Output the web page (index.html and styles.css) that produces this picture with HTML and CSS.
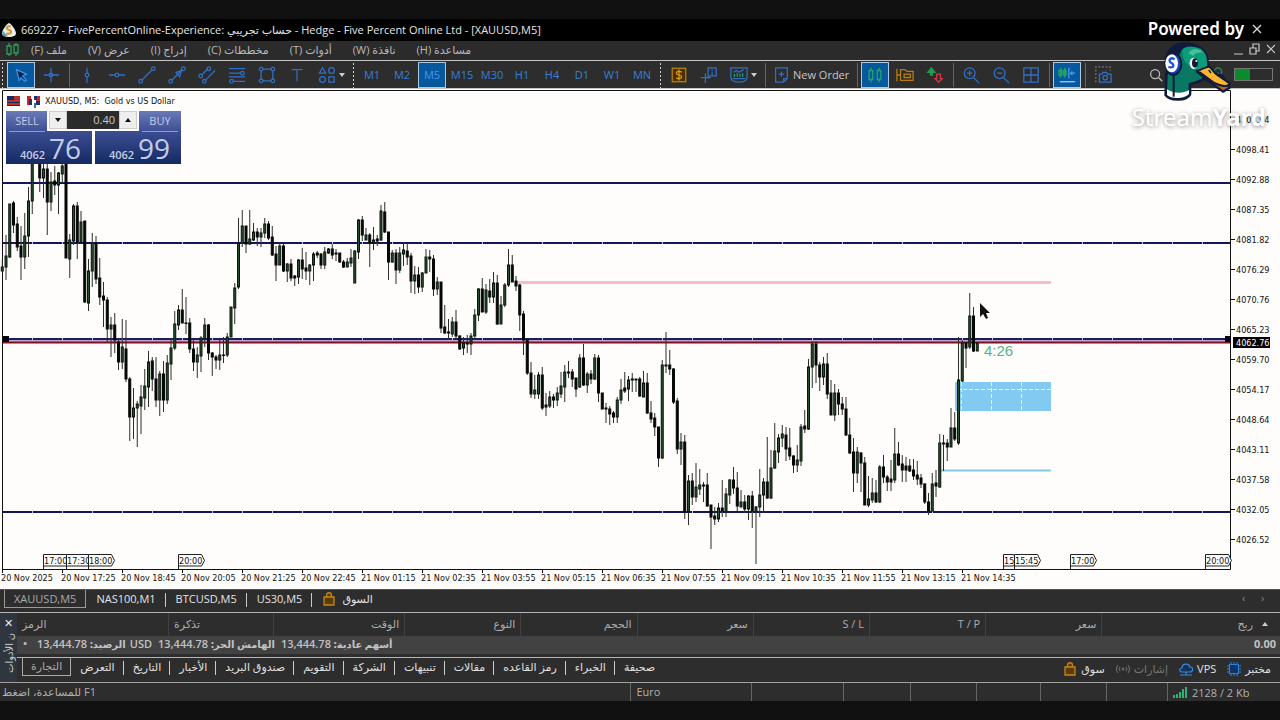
FILE: index.html
```html
<!DOCTYPE html>
<html lang="ar" dir="ltr">
<head>
<meta charset="utf-8">
<meta name="viewport" content="width=device-width, initial-scale=1">
<title>XAUUSD,M5</title>
<link rel="stylesheet" href="styles.css">
</head>
<body>
<header class="titlebar">
  <svg class="applogo" viewBox="0 0 16 16"><path d="M8 0c4 2 8 9 8 12 0 2-3 4-8 4s-8-2-8-4C0 9 4 2 8 0z" fill="#e8edf0"/><path d="M1 9l6 6H2c-2-1-2-3-1-6z" fill="#5aa0bd"/><path d="M10 4c-5-1-6 3-2 4s3 5-3 4" fill="none" stroke="#d29a28" stroke-width="2.4"/></svg>
  <span>669227 - FivePercentOnline-Experience: حساب تجريبي - Hedge - Five Percent Online Ltd - [XAUUSD,M5]</span>
</header>
<nav class="menubar">
  <svg class="menulogo" viewBox="0 0 14 14" fill="none" stroke="#27a35a" stroke-width="1.3"><path d="M3 0v3M3 11v2M10 0v2M10 10v3M1 3h4v8H1zM8 2h4v8H8z"/></svg>
  <button dir="rtl">ملف (F)</button><button dir="rtl">عرض (V)</button><button dir="rtl">إدراج (I)</button><button dir="rtl">مخططات (C)</button><button dir="rtl">أدوات (T)</button><button dir="rtl">نافذة (W)</button><button dir="rtl">مساعدة (H)</button>
  <svg class="winbtns" viewBox="0 0 42 14" fill="none" stroke="#c8c8c8" stroke-width="1.2"><path d="M1 11h9M17 5h6v6h-6zM20 5V1h6v7h-3M34 2l8 8M42 2l-8 8"/></svg>
</nav>
<div class="toolbar">
  <i class="grip"></i>
  <button class="tool on" aria-label="Cursor"><svg viewBox="0 0 20 20"><path d="M5 4l11 5-4 2 4 5-2 1-4-4-2 3z" fill="#0a2348" stroke="#3f92e8"/></svg></button>
  <button class="tool" aria-label="Crosshair"><svg viewBox="0 0 20 20"><path d="M10 2v16M2 10h6M12 10h7M8 10a2 2 0 1 0 4 0 2 2 0 1 0-4 0"/></svg></button>
  <i class="sep"></i>
  <button class="tool" aria-label="Vertical line"><svg viewBox="0 0 20 20"><path d="M10 2v6M10 12v7"/><circle cx="10" cy="10" r="2"/></svg></button>
  <button class="tool" aria-label="Horizontal line"><svg viewBox="0 0 20 20"><path d="M1 10h7M12 10h7"/><circle cx="10" cy="10" r="2"/></svg></button>
  <button class="tool" aria-label="Trend line"><svg viewBox="0 0 20 20"><path d="M4.500 15.500L15.500 4.500"/><circle cx="3" cy="17" r="2"/><circle cx="17" cy="3" r="2"/></svg></button>
  <button class="tool" aria-label="Arrow line"><svg viewBox="0 0 20 20"><path d="M4.500 15.500L15.500 4.500M9 7l6-2-2 7z"/><circle cx="3" cy="17" r="2"/><circle cx="17" cy="3" r="2"/></svg></button>
  <button class="tool" aria-label="Channel"><svg viewBox="0 0 20 20"><path d="M4 10l7-7M8 16l11-11"/><circle cx="3" cy="11" r="2"/><circle cx="12" cy="3" r="2"/><circle cx="7" cy="17" r="2"/></svg></button>
  <button class="tool" aria-label="Fibonacci"><svg viewBox="0 0 20 20"><path d="M1 3h18M1 8h13M1 12h18M6 17h13M1 17h1"/><circle cx="16" cy="8" r="2"/><circle cx="4" cy="17" r="2"/></svg></button>
  <button class="tool" aria-label="Rectangle"><svg viewBox="0 0 20 20"><path d="M5 3.500h10M5 16.500h10M3.500 5v10M16.500 5v10"/><circle cx="3.500" cy="3.500" r="2"/><circle cx="16.500" cy="3.500" r="2"/><circle cx="3.500" cy="16.500" r="2"/><circle cx="16.500" cy="16.500" r="2"/></svg></button>
  <button class="tool" aria-label="Text"><svg viewBox="0 0 20 20"><path d="M4 4h12M10 4v13"/></svg></button>
  <button class="tool menu" aria-label="Shapes"><svg viewBox="0 0 20 20"><path d="M1.500 8l3.500-6 3.500 6zM12 12h6v6h-6z"/><circle cx="15" cy="5" r="3.200"/><circle cx="5" cy="15" r="3.200"/></svg><i class="caret"></i></button>
  <i class="grip"></i>
  <button class="tool">M1</button><button class="tool">M2</button><button class="tool on">M5</button><button class="tool">M15</button><button class="tool">M30</button><button class="tool">H1</button><button class="tool">H4</button><button class="tool">D1</button><button class="tool">W1</button><button class="tool">MN</button>
  <i class="grip"></i>
  <button class="tool" aria-label="Symbols"><svg viewBox="0 0 20 20"><rect x="2.500" y="2.500" width="15" height="15" fill="#4b3000" stroke="#b9810f"/><path d="M13 7c-2-2-6-1-6 1s6 2 6 4-4 3-6 1M10 4v12" stroke="#dd9a18"/></svg></button>
  <button class="tool" aria-label="Data window"><svg viewBox="0 0 20 20"><path d="M6 8v11M1 13h11M9 2h9v9h-7l-2 2zM13.500 4v1.500M13.500 7v3"/></svg></button>
  <button class="tool menu" aria-label="Indicators"><svg viewBox="0 0 20 20"><path d="M1 2h18v11c0 3-4 5-9 5s-9-2-9-5zM4 7l3-2 3 2 5-3M3 14h14"/><path d="M5 12V9M8 12V8M11 12V9M14 12V8" stroke="#2a9f67"/></svg><i class="caret"></i></button>
  <i class="sep"></i>
  <button class="tool order"><svg viewBox="0 0 20 20"><path d="M4 2h13v12l-4 4H4zM10.500 6v6M7.500 9h6M17 14h-4v4"/></svg>New Order</button>
  <i class="sep"></i>
  <button class="tool on" aria-label="Candles"><svg viewBox="0 0 20 20" stroke="#23a765"><path d="M5.500 2v3M5.500 15v3M14.500 2v3M14.500 15v3M3.500 5h4v10h-4zM12.500 5h4v10h-4z"/></svg></button>
  <button class="tool" aria-label="Templates"><svg viewBox="0 0 20 20" stroke="#b77c12"><path d="M1 3v14M1 10h4M5 16V4h5l2 2h7v10z"/><path d="M9 9h7v4H9z" fill="#503700"/></svg></button>
  <button class="tool" aria-label="Trading"><svg viewBox="0 0 20 20"><path d="M5 10V7H2l4-5 4 5H7v3z" stroke="#259852" fill="#259852"/><path d="M12 9v5h-2l4 4 4-4h-2V9z" stroke="#d83b48"/></svg></button>
  <i class="sep"></i>
  <button class="tool" aria-label="Zoom in"><svg viewBox="0 0 20 20"><circle cx="8.500" cy="8" r="6"/><path d="M13 13l6 6M8.500 5v6M5.500 8h6"/></svg></button>
  <button class="tool" aria-label="Zoom out"><svg viewBox="0 0 20 20"><circle cx="8.500" cy="8" r="6"/><path d="M13 13l6 6M5.500 8h6"/></svg></button>
  <button class="tool" aria-label="Tile windows"><svg viewBox="0 0 20 20"><path d="M2 2h16v16H2zM10 2v16M2 10h16"/></svg></button>
  <i class="sep"></i>
  <button class="tool on" aria-label="Chart shift"><svg viewBox="0 0 20 20"><path d="M3 2v11M1 5h3v5H1zM7.500 2v11M6 5h3v5H6z" stroke="#23a765"/><path d="M12 2v12M19 8h-5M16 6l-2 2 2 2" stroke="#4a9dee"/><path d="M2 17.500h17" stroke="#9fd0f5"/></svg></button>
  <i class="sep"></i>
  <button class="tool" aria-label="Screenshot"><svg viewBox="0 0 20 20"><path d="M2 18V1h16v4" stroke="#747c88" stroke-dasharray="2 2"/><path d="M6 9h3l1-2h4l1 2h4v9H6z" stroke="#2d76cd"/><circle cx="12.500" cy="13" r="2.500"/></svg></button>
  <span class="fill"></span>
  <button class="tool search" aria-label="Search"><svg viewBox="0 0 20 20" stroke="#bcbcbc"><circle cx="9" cy="9" r="5"/><path d="M13 13l4 4"/></svg></button>
  <button class="tool" aria-label="Connection"><svg viewBox="0 0 20 20" stroke="#26905a"><path d="M10 7v10M7 9a4 4 0 1 1 6 0"/></svg></button>
  <span class="battery"></span>
</div>

<main class="chart">
  <svg id="plot" class="plot" viewBox="0 89 1280 500" role="img" aria-label="XAUUSD M5">
    <g class="frame"><path d="M2.500 569V90.500H1230.500V569.500H2.500"/></g>
    <path d="M3 183H1230M3 243H1230M3 512H1230" stroke="#15155c" stroke-width="2"/>
    <path d="M3 340H1230" stroke="#b9a9d2" stroke-width="4"/>
    <path d="M3 339H1230" stroke="#1e1b62" stroke-width="2"/>
    <path d="M32 243H1230M32 339H1230M32 512H1230" stroke="#fff" stroke-width="2" stroke-dasharray="1 29" opacity=".75"/>
    <path d="M3 342.500H1230" stroke="#850d20" stroke-width="2"/>
    <path d="M517 282.500H1051" stroke="#f6bccb" stroke-width="3"/>
    <path d="M940 470.500H1051" stroke="#8ac8e4" stroke-width="2"/>
    <path d="M955 382h96v29h-96z" fill="#83caf3"/>
    <path d="M957 389.500h94M961.500 382v29M991.500 382v29M1021.500 382v29" stroke="#e4f5ff" stroke-dasharray="4 2" fill="none"/>
    <g id="candles"></g>
    <path d="M3 336h6v6H3zM1225 336h6v6h-6z" fill="#050510"/>
    <g id="axes" class="axis"></g>
    <text x="984" y="356" class="timer">4:26</text>
    <path d="M980 303v14l3-3 3 5 2-1-2-5h4z" fill="#111"/>
    <path d="M1233 337h37v11h-37z" fill="#000"/><text x="1236" y="346" class="axis now">4062.76</text>
  </svg>
  <div class="symbol">
    <svg viewBox="0 0 34 14"><path d="M0 2h13v10H0z" fill="#b5332b"/><path d="M0 2h7v4H0zM0 8h13v1H0zM0 11h13v1H0z" fill="#182b66"/><path d="M20 2h4v9h-4zM29 2h4v6h-4z" fill="#c02a2a"/><path d="M22 5h3v6h-3zM27 2h3v4h-3zM29 7h4v4h-4z" fill="#1d3270"/><path d="M28 9v5" stroke="#3c6ba5" stroke-width="2"/></svg>
    <span>XAUUSD, M5:&nbsp; Gold vs US Dollar</span>
  </div>
  <div class="deal">
    <button class="side"><span class="act">SELL</span><span class="quote"><small>4062</small>76</span></button>
    <button class="side buy"><span class="act">BUY</span><span class="quote"><small>4062</small>99</span></button>
    <div class="volume"><button aria-label="Less"><i class="caret"></i></button><input aria-label="Volume" value="0.40"><button aria-label="More"><i class="caret up"></i></button></div>
  </div>
</main>

<nav class="charttabs">
  <button class="active">XAUUSD,M5</button><button>NAS100,M1</button><button>BTCUSD,M5</button><button>US30,M5</button>
  <button class="market"><svg viewBox="0 0 14 14"><path d="M2 5h10v8H2zM4.500 5V3c0-3 5-3 5 0v2" fill="#5a3c06" stroke="#c58618" stroke-width="1.300"/></svg>السوق</button>
  <span class="fill"></span><span class="scroll">‹</span><span class="scroll">›</span>
</nav>

<section class="toolbox">
  <aside class="strip"><button aria-label="Close">✕</button><span class="vert">ن الأدوات</span></aside>
  <div class="panel">
    <table class="trades">
      <colgroup><col class="c1"><col class="c2"><col class="c3"><col class="c4"><col class="c4"><col class="c4"><col class="c4"><col class="c4"><col class="c4"><col></colgroup>
      <thead><tr><th class="l">الرمز</th><th class="l">تذكرة</th><th>الوقت</th><th>النوع</th><th>الحجم</th><th>سعر</th><th>S / L</th><th>T / P</th><th>سعر</th><th class="last">ربح<i class="caret up"></i></th></tr></thead>
      <tbody><tr><td colspan="9" class="sum"><span class="dot">•</span><span dir="rtl"><b>الرصيد:</b> 13,444.78</span><span class="usd">USD</span><span class="part" dir="rtl"><b>الهامش الحر:</b> 13,444.78</span><span dir="rtl"><b>أسهم عادية:</b> 13,444.78</span></td><td class="profit">0.00</td></tr></tbody>
    </table>
    <nav class="boxtabs">
      <button class="active">التجارة</button><button>التعرض</button><button>التاريخ</button><button>الأخبار</button><button>صندوق البريد</button><button>التقويم</button><button>الشركة</button><button>تنبيهات</button><button>مقالات</button><button>رمز القاعده</button><button>الخبراء</button><button>صحيفة</button>
      <span class="fill"></span>
      <span class="links">
        <a href="#"><svg viewBox="0 0 14 14"><path d="M2 5h10v8H2zM4.500 5V3c0-3 5-3 5 0v2" fill="#5a3c06" stroke="#c58618" stroke-width="1.300"/></svg>سوق</a>
        <a href="#" class="dim"><svg viewBox="0 0 14 14" fill="none" stroke="#777"><path d="M2 3c-2 3-2 5 0 8M4 5c-1 2-1 2 0 4M12 3c2 3 2 5 0 8M10 5c1 2 1 2 0 4"/><circle cx="7" cy="7" r="1"/></svg>إشارات</a>
        <a href="#"><svg viewBox="0 0 14 14" fill="#12345c" stroke="#3b88de" stroke-width="1.200"><path d="M3 10C0 10 0 6 3 6c0-5 7-5 8-1 4 0 3 5 0 5zM1 13h12M7 10v3"/></svg>VPS</a>
        <a href="#"><svg viewBox="0 0 14 14"><path d="M4 0v14M7 0v14M10 0v14M0 4h14M0 7h14M0 10h14" stroke="#2e83d8"/><rect x="2.500" y="2.500" width="9" height="9" fill="#0d3569" stroke="#2e83d8"/></svg>مختبر</a>
      </span>
    </nav>
  </div>
</section>

<footer class="status">
  <span class="help">للمساعدة، اضغط F1</span><span>Euro</span><span></span><span></span><span></span><span></span><span></span><span></span>
  <span class="net"><svg viewBox="0 0 14 12"><path d="M1 12v-3M4 12V8M7 12V6M10 12V3M13 12V1" stroke="#2bb377" stroke-width="2"/></svg>2128 / 2 Kb</span>
</footer>

<div class="brand">
  <div class="powered">Powered by <svg viewBox="0 0 10 10" stroke="#ddd" stroke-width="1.300"><path d="M1 1l8 8M9 1L1 9"/></svg></div>
  <svg class="duck" viewBox="120 90 219 189">
    <path d="M150 150c0-60 90-65 110-10l8 40c-5 30-35 35-58 43v30c-10 20-60 20-73 2l2-60z" fill="#087763" stroke="#101a3a" stroke-width="8" stroke-linejoin="round"/>
    <path d="M187 115c30-18 66-2 73 28l2 32-32 8c-20-15-47-25-43-68z" fill="#0b9c7a"/>
    <path d="M205 130c10-18 34-16 43-2-16-2-24 2-28 10z" fill="#46c19a"/>
    <path d="M141 238c18 12 47 14 66 2v12c-15 16-53 15-66 3z" fill="#fff"/>
    <path d="M134 160c0-65 70-80 106-44-30-12-55-8-62 20z" fill="#101a3a"/>
    <path d="M161 190v70" stroke="#101a3a" stroke-width="6"/>
    <path d="M230 183l35 30 44 32 20-12-22-36z" fill="#a86432" stroke="#101a3a" stroke-width="7" stroke-linejoin="round"/>
    <path d="M232 182c16-4 24-12 34-12 10 3 12 15 25 24l38 26c-4 14-27 8-46-1z" fill="#fcb52c" stroke="#101a3a" stroke-width="6" stroke-linejoin="round"/>
    <path d="M266 180l7 9" stroke="#101a3a" stroke-width="4"/>
    <ellipse cx="221" cy="160" rx="12" ry="17" fill="#fff"/><ellipse cx="225" cy="159" rx="9" ry="14" fill="#101a3a"/><circle cx="229" cy="153" r="3" fill="#fff"/>
    <ellipse cx="160" cy="162" rx="24" ry="32" fill="#1745bd" stroke="#101a3a" stroke-width="6"/>
    <ellipse cx="155" cy="160" rx="19" ry="27" fill="#fff"/>
    <path d="M164 148c-10-9-22 4-11 10s10 18-8 13" fill="none" stroke="#1c54d8" stroke-width="7"/>
  </svg>
  <div class="wordmark"><span>Stream</span><b>Yard</b></div>
</div>
<script src="chart.js"></script>
</body>
</html>
```

FILE: styles.css
```css
* { box-sizing: border-box; }
body {
  margin: 0;
  min-height: 100vh;
  padding-top: 19px;
  background: #111;
  color: #d2d2d2;
  font: 11px/16px "Open Sans", "Noto Sans", "DejaVu Sans", sans-serif;
  position: relative;
  overflow-x: hidden;
}
button, input { font: inherit; color: inherit; background: none; border: 0; padding: 0; margin: 0; }
a { color: inherit; text-decoration: none; }
svg { display: block; flex: none; }
.fill { flex: 1; }

.titlebar { display: flex; align-items: center; gap: 5px; height: 22px; padding-left: 2px; background: #000; color: #e6e6e6; white-space: nowrap; }
.applogo { width: 14px; height: 14px; }
.menubar { display: flex; align-items: center; gap: 21px; height: 19px; padding: 0 5px 2px 6px; background: #2b2b2b; color: #b9b9b9; white-space: nowrap; }
.menulogo { width: 14px; height: 14px; margin-right: -10px; }
.winbtns { width: 42px; height: 14px; margin-left: auto; }

.toolbar { display: flex; align-items: center; gap: 2px; height: 29px; border: solid #c4c4c4; border-width: 1px 0; background: #2d2d2d; color: #3a7fd6; padding-right: 7px; }
.grip { width: 5px; height: 26px; background: radial-gradient(circle, #ccc 1px, transparent 1px) 0 0 / 5px 4px; }
.sep { width: 4px; height: 24px; background: linear-gradient(#666, #666) center / 1px 100% no-repeat; }
.tool { display: flex; align-items: center; justify-content: center; width: 28px; height: 26px; flex: none; }
.tool svg { width: 18px; height: 18px; fill: none; stroke-width: 1.4; }
.tool svg:not([stroke]) { stroke: #2f70c6; }
.tool.on { background: #07589c; border: 1px solid #a9c9e4; color: #4b94ea; }
.tool.menu { width: 36px; gap: 3px; }
.tool.order { width: auto; color: #c6c6c6; padding: 0 4px 0 3px; gap: 3px; }
.tool.search { margin-right: 32px; }
.caret { width: 0; height: 0; border: solid transparent; border-width: 4px 3px 0; border-top-color: #ccc; }
.caret.up { border-width: 0 3px 4px; border-top-color: transparent; border-bottom-color: #ccc; }
.battery { width: 39px; height: 13px; border: 1px solid #777; background: linear-gradient(#0b8c2c, #0b8c2c) 0 0 / 15px 100% no-repeat; }

.chart { position: relative; background: #fffdfc; }
.plot { width: 100%; height: auto; }
.frame { fill: none; stroke: #111; }
.axis { font: 9px "DejaVu Sans Condensed", "DejaVu Sans", sans-serif; font-stretch: condensed; fill: #111; }
.axis.now { fill: #fff; }
.axis path { stroke: #111; }
.axis .tag { fill: #fffdfc; stroke: #222; }
.timer { font: 15px "Liberation Sans", sans-serif; fill: #58b383; }
.wick { stroke: #2d2d2b; }
.bear { fill: #050805; stroke: #050805; }
.bull { fill: #28502f; stroke: #0a160c; }
.symbol { position: absolute; left: 7px; top: 5px; display: flex; align-items: center; gap: 4px; height: 14px; font: 9px "DejaVu Sans Condensed", "DejaVu Sans", sans-serif; font-stretch: condensed; color: #111; }
.symbol svg { width: 34px; height: 14px; }
.deal { position: absolute; left: 6px; top: 22px; display: flex; gap: 3px; width: 175px; height: 53px; background: #fffdfc; color: #c2cce6; }
.side { flex: 1; display: flex; flex-direction: column; justify-content: space-between; align-items: flex-start; background: linear-gradient(#6a7ab8, #3b4c92 40%, #142a62); }
.side.buy { align-items: flex-end; }
.act { width: 36px; margin: 0 3px; height: 21px; line-height: 20px; border-bottom: 1px solid #8e9bd0; text-align: center; }
.quote { width: 100%; height: 32px; display: flex; align-items: baseline; justify-content: center; gap: 4px; padding-left: 3px; font-size: 28px; line-height: 32px; }
.quote small { font-size: 11px; font-weight: 600; }
.volume { position: absolute; left: 41px; top: 0; display: flex; width: 92px; height: 20px; padding: 0 2px 2px; background: #fffdfc; }
.volume button { width: 18px; display: flex; align-items: center; justify-content: center; background: #eee; border: 1px solid #ccc; }
.volume .caret { border-top-color: #111; }
.volume .caret.up { border-top-color: transparent; border-bottom-color: #111; }
.volume input { flex: 1; width: 10px; background: #2b2b2b; color: #c8c8c8; text-align: right; padding-right: 4px; }

.charttabs { display: flex; height: 23px; padding-left: 4px; background: #2d2d2d; border-top: 1px solid #555; color: #e4e4e4; white-space: nowrap; }
.charttabs button { position: relative; padding: 0 10px; height: 18px; }
.charttabs .active { padding: 0 9px; border: 1px solid #999; border-top: 0; color: #aaa; }
.charttabs button + button:not(.active):not(:last-of-type)::after, .boxtabs button:not(.active):not(:last-of-type)::after { content: ""; position: absolute; right: 0; top: 3px; width: 1px; height: 14px; background: #ccc; }
.charttabs .market { display: flex; align-items: center; gap: 6px; }
.market svg, .links svg { width: 14px; height: 14px; }
.scroll { width: 19px; color: #888; }

.toolbox { display: flex; border-top: 1px solid #b5b5b5; background: #2d2d2d; height: 70px; }
.strip { width: 17px; overflow: hidden; background: #303640; display: flex; flex-direction: column; align-items: center; }
.strip button { height: 20px; line-height: 20px; color: #eee; }
.vert { writing-mode: vertical-rl; transform: rotate(180deg); font-size: 10px; line-height: 14px; white-space: nowrap; }
.panel { flex: 1; min-width: 0; }
.trades { width: 100%; table-layout: fixed; border-collapse: collapse; white-space: nowrap; border-bottom: 3px solid #2d2d2d; }
.c1 { width: 12%; } .c2 { width: 8.3%; } .c3 { width: 10.4%; } .c4 { width: 9.2%; }
.trades th { height: 23px; padding: 0 5px 2px; text-align: right; font-weight: 400; color: #adadad; border-right: 1px solid #414141; }
.trades th.l { text-align: left; }
.trades th.last { padding-right: 12px; border: 0; }
.last .caret { display: inline-block; margin: 0 0 2px 9px; }
.trades td { height: 19px; padding: 0 0 1px; background: #424242; font-weight: 600; color: #c2c2c2; }
.sum span { display: inline-block; }
.sum b { font-size: 10px; }
.dot { width: 14px; margin-left: 6px; }
.sum .usd { margin: 0 6px 0 4px; }
.sum .part { margin-right: 6px; }
.trades td.profit { text-align: right; padding-right: 4px; font-weight: 700; }
.boxtabs { display: flex; height: 24px; border-top: 1px solid #b5b5b5; padding-left: 5px; white-space: nowrap; color: #e0e0e0; }
.boxtabs button { position: relative; padding: 0 9px; height: 18px; }
.boxtabs .active { padding: 0 8px; border: 1px solid #aaa; border-top: 0; color: #aaa; }
.links { display: flex; gap: 11px; align-items: center; padding-right: 9px; }
.links a { display: flex; align-items: center; gap: 4px; }
.links .dim { color: #777; }

.status { display: grid; grid-template-columns: 630fr 120fr 92fr 67fr 66fr 64fr 66fr 61fr 113fr; height: 19px; border-top: 1px solid #a2a2a2; background: #2d2d2d; color: #b0b0b0; white-space: nowrap; }
.status span { padding-left: 5px; border-left: 1px solid #666; line-height: 17px; }
.status .help { border: 0; padding-left: 2px; }
.net { display: flex; align-items: center; gap: 5px; }
.net svg { width: 14px; height: 12px; }

.brand { position: absolute; right: 14px; top: 18px; width: 138px; color: #fff; pointer-events: none; }
.powered { display: flex; align-items: center; justify-content: flex-end; gap: 8px; padding-right: 4px; font: 600 17px/22px "Noto Sans", sans-serif; white-space: nowrap; }
.powered svg { width: 10px; height: 10px; }
.duck { width: 73px; height: 63px; margin-left: 32px; }
.wordmark { font: 400 24px/28px "Noto Sans", sans-serif; text-shadow: 0 1px 4px rgba(0, 0, 0, .45); display: flex; justify-content: flex-end; }
.wordmark b { font-weight: 700; }
```

FILE: chart.js
```js
const NS = "http://www.w3.org/2000/svg";

// high, body top, body bottom, low; trailing "+" marks a rising candle
const candles = `260 267 271 271+,235 256 267 280+,204 204 257 258+,201 203 225 233,217 224 247 251,226 246 257 280,213 236 257 269+,187 201 236 257+,150 155 201 214+,150 152 158 163,155 160 178 192,163 169 178 198+,163 169 202 235,172 182 202 211+,166 181 185 195,172 173 185 214+,160 166 174 183+,160 160 258 258,234 240 259 278+,204 206 241 245+,202 206 242 259,211 222 242 242+,221 221 302 303,259 271 303 311+,233 243 271 287+,236 243 279 284,258 278 297 305,282 296 300 327,297 300 329 342,317 325 329 357+,313 325 340 353,338 342 362 370,319 347 362 369+,320 349 379 382,377 379 417 441,388 408 417 439+,401 404 408 447+,385 397 406 434+,369 386 398 410+,351 362 387 407+,357 361 379 391,357 379 400 407,371 374 400 416+,361 374 400 412,355 363 400 404+,338 348 364 380+,311 324 348 350+,305 310 325 330+,289 310 323 323,297 323 323 334,318 323 349 353,339 349 362 371,347 355 362 378+,336 338 356 372+,318 325 339 347+,324 325 353 360,352 353 357 376,355 357 360 369,340 355 360 370+,337 355 355 363,333 337 355 357+,307 307 337 337+,283 288 308 324+,218 243 287 289+,210 226 243 247+,226 226 244 253,210 239 244 245+,223 232 240 241+,228 232 237 246,228 233 237 247+,218 224 233 238+,221 224 238 240,226 237 255 256,246 254 265 281,242 246 265 265+,243 246 271 272,263 264 271 282+,259 264 278 281,275 276 278 286,259 260 277 284+,248 260 269 279,252 268 271 280,264 265 271 285+,252 254 265 281+,251 253 255 258,253 254 265 269,247 252 265 269+,248 249 253 254+,244 249 255 259,249 253 254 261,253 253 262 263,260 262 267 268,258 262 267 267+,249 258 263 267+,250 251 283 283+,219 220 252 259+,216 220 235 241,228 235 240 240+,233 235 243 267,227 240 243 250+,235 239 241 246,205 211 240 241+,202 212 232 233,232 232 262 280,250 253 262 263+,249 253 270 284,247 253 270 273+,243 250 254 266+,243 251 257 265,253 256 281 293,266 275 281 294+,267 275 287 293,272 273 287 292+,249 257 273 273+,250 257 259 272,255 259 289 296,277 282 289 295+,282 282 328 333,305 327 333 334,319 332 333 340,317 322 334 337+,310 322 336 340,335 336 349 350,337 343 348 355+,335 343 344 353,333 336 344 355+,309 315 336 340+,288 289 315 321+,278 289 312 312,284 290 312 314+,279 291 297 303,272 283 297 303+,275 283 324 325,296 305 324 324+,283 285 305 307+,249 265 285 287+,255 265 282 282,276 281 286 291,284 285 315 331,311 314 340 355,339 340 373 375,362 373 394 398,375 390 394 399+,372 375 394 399+,367 375 408 410,393 405 407 416,391 397 406 408+,394 397 400 408,387 393 400 406+,372 386 394 398+,365 372 387 402+,361 372 373 378,369 372 379 387,378 378 389 397,354 358 387 388+,344 358 385 386,372 374 385 393+,370 374 379 384,354 358 379 380+,355 358 393 402,393 393 409 409,403 408 409 423,406 409 414 425,411 413 417 423,397 400 417 423+,379 390 400 404+,372 388 391 393,376 380 389 401+,373 379 380 392,379 379 380 392,377 379 396 397,371 383 397 397+,373 383 413 414,401 413 419 423,413 418 427 436,427 427 458 467,360 365 458 459+,332 365 366 373,350 365 369 375,368 369 402 404,398 401 449 454,433 442 449 465+,435 442 512 519,475 481 512 525+,473 481 497 505,463 487 497 502+,469 485 489 495+,482 485 486 502,473 485 506 507,505 505 517 549,507 516 519 525,503 508 519 522+,480 508 511 517,488 494 512 517+,479 480 495 504+,467 480 488 494,472 488 506 511,490 502 507 507+,495 502 509 513,495 496 509 520+,491 496 511 528,506 507 511 564+,469 495 507 517+,478 482 495 513+,437 482 498 499,450 468 498 499+,423 451 468 469+,434 438 452 463+,425 434 438 447+,427 435 449 461,428 448 456 460,455 456 465 473,445 460 465 472+,424 427 461 466+,410 426 429 433,359 367 429 430+,341 344 367 388+,341 344 365 383,362 365 377 391,357 364 377 385+,353 364 394 399,380 393 415 415,384 393 415 421+,389 393 404 415,397 404 409 415,397 409 435 436,418 435 453 454,438 452 473 492,447 452 473 483+,452 453 463 492,457 463 505 505,476 499 505 507+,478 493 500 503+,480 493 502 503,465 467 502 503+,455 467 477 483,475 477 482 491,460 479 482 491,428 454 480 483+,442 454 465 466,455 464 470 482,457 466 470 482,459 466 471 472,459 470 476 480,461 475 479 485,474 478 484 488,483 484 502 504,493 502 511 515,473 484 511 511+,470 483 486 497,434 443 487 488+,435 443 444 471,439 443 447 461,408 428 447 447+,412 428 439 441,337 380 443 445+,340 343 381 382+,342 343 348 368,293 316 347 349+,307 316 351 352,343 343 351 351+`;

const STEP = 3.75;
const ORIGIN = 2.25;

function add(parent, name, attrs, text) {
  const el = document.createElementNS(NS, name);
  for (const key in attrs) el.setAttribute(key, attrs[key]);
  if (text) el.textContent = text;
  parent.appendChild(el);
}

const group = document.getElementById("candles");
candles.split(",").forEach((row, i) => {
  const rising = row.endsWith("+");
  const [high, top, bottom, low] = row.replace("+", "").split(" ").map(Number);
  const x = ORIGIN + i * STEP;
  add(group, "path", { d: `M${x} ${high}V${low}`, class: "wick" });
  add(group, "rect", {
    x: x - 1, y: top, width: 2, height: Math.max(bottom - top, 0.4),
    class: rising ? "bull" : "bear"
  });
});

const axes = document.getElementById("axes");
for (let i = 0; i < 15; i++) {
  const y = 120 + i * 30;
  add(axes, "path", { d: `M1231 ${y - 0.5}h4` });
  add(axes, "text", { x: 1236, y: y + 3 }, (4103.94 - i * 5.53).toFixed(2));
}

const times = ["20 Nov 2025", "20 Nov 17:25", "20 Nov 18:45", "20 Nov 20:05", "20 Nov 21:25", "20 Nov 22:45", "21 Nov 01:15", "21 Nov 02:35", "21 Nov 03:55", "21 Nov 05:15", "21 Nov 06:35", "21 Nov 07:55", "21 Nov 09:15", "21 Nov 10:35", "21 Nov 11:55", "21 Nov 13:15", "21 Nov 14:35"];
times.forEach((label, i) => {
  add(axes, "path", { d: `M${2.5 + i * 60} 569v4` });
  add(axes, "text", { x: 1 + i * 60, y: 581 }, label);
});

const tags = [[43, "17:00"], [66, "17:30"], [88, "18:00"], [178, "20:00"], [1003, "15"], [1014, "15:45"], [1070, "17:00"], [1205, "20:00"]];
tags.forEach(([x, label]) => {
  const w = label.length > 2 ? 23 : 10;
  add(axes, "path", { d: `M${x + 0.5} 569V554.500h${w}l3 6l-3 5.500H${x + 0.5}`, class: "tag" });
  add(axes, "text", { x: x + 1, y: 564 }, label);
});
```
